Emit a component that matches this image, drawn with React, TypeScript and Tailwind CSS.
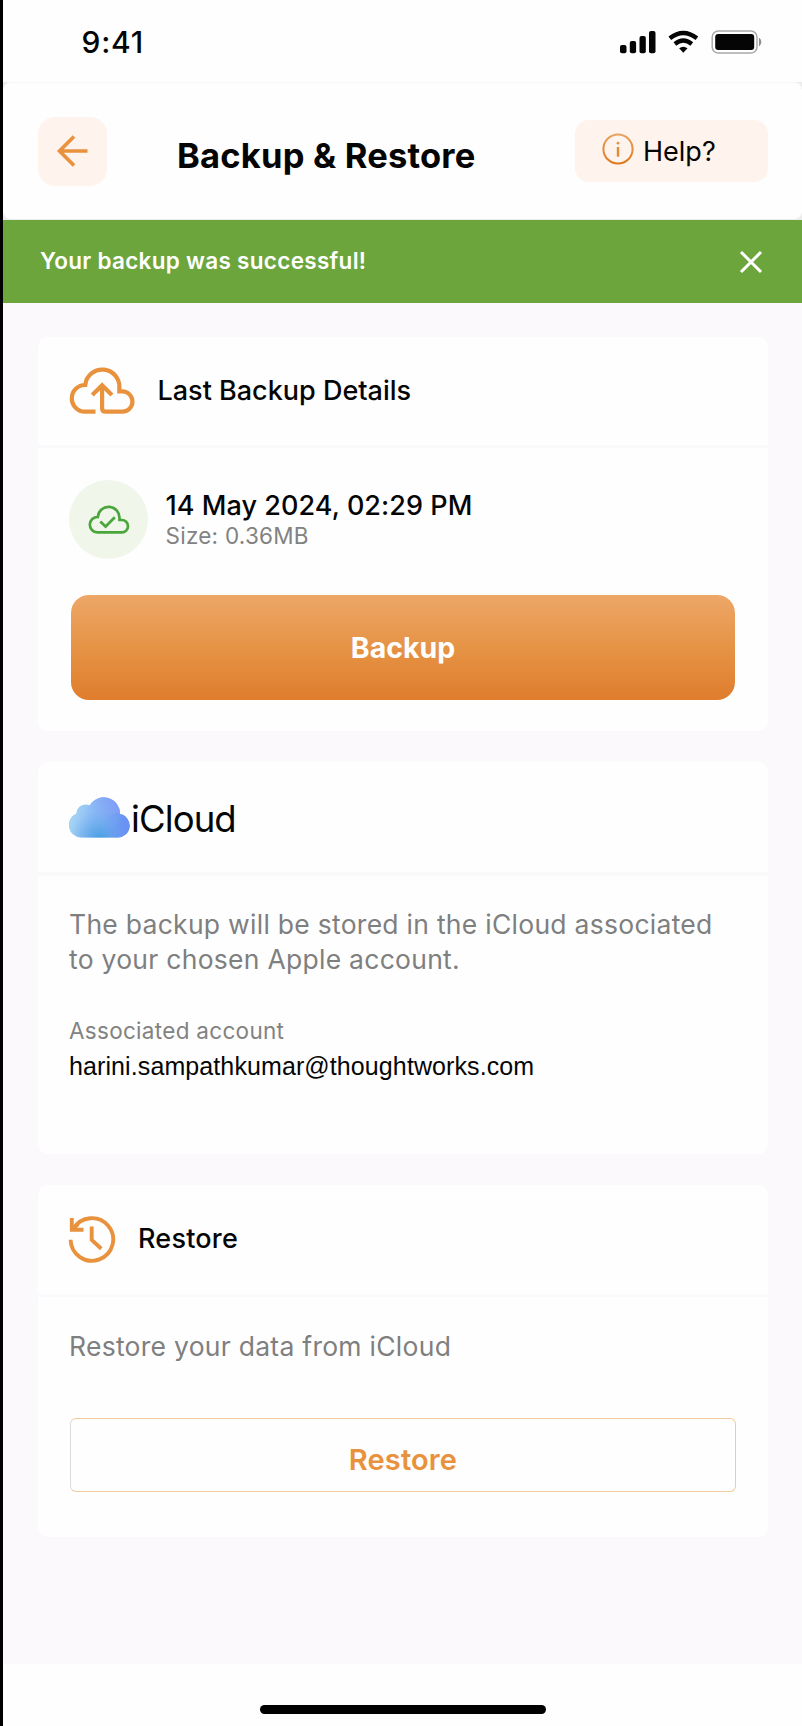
import type { ReactNode } from "react";

function StatusIcons() {
  return (
    <svg width="144" height="26" viewBox="617.5 29 144 26" fill="#050505">
      <rect x="619.5" y="45" width="6.5" height="8.3" rx="2" />
      <rect x="629.3" y="41" width="6.3" height="12.3" rx="2" />
      <rect x="639" y="36" width="6.3" height="17.3" rx="2" />
      <rect x="648.5" y="31" width="6.5" height="22.3" rx="2" />
      <g fill="none" stroke="#050505" strokeWidth="4.4">
        <path d="M669.3 38.2 Q682.8 27.6 696.4 38.2" />
        <path d="M674.4 43.9 Q682.8 37.3 691.3 43.9" />
      </g>
      <path d="M678.6 48.3 Q682.8 45 687 48.3 L682.8 52.8 Z" />
      <rect x="711.7" y="31" width="44.8" height="22" rx="6" fill="none" stroke="#a9a9a9" strokeWidth="1.5" />
      <rect x="714.7" y="34" width="39" height="16" rx="3" />
      <path d="M759 38.3 Q762 42 759 45.7 Z" fill="#8f8f8f" stroke="#8f8f8f" />
    </svg>
  );
}

function BackArrow() {
  return (
    <svg width="32" height="32" viewBox="56 134.5 32 32" fill="none" stroke="#e8923d" strokeWidth="3.6">
      <path d="M87.5 150.5 H59.5 M74 136 L59.5 150.5 L74 165" />
    </svg>
  );
}

function InfoIcon() {
  return (
    <svg width="32" height="32" viewBox="0 0 32 32" fill="none">
      <defs>
        <linearGradient id="info" x1="0" y1="0" x2="0" y2="32" gradientUnits="userSpaceOnUse">
          <stop stopColor="#eaa462" />
          <stop offset="1" stopColor="#dc7618" />
        </linearGradient>
      </defs>
      <circle cx="16" cy="16" r="14.6" stroke="url(#info)" strokeWidth="2" />
      <circle cx="16" cy="10.2" r="1.4" fill="#e39343" />
      <rect x="14.8" y="14" width="2.4" height="9.7" fill="#e08a36" />
    </svg>
  );
}

function CloudUpload() {
  return (
    <svg width="66" height="48" viewBox="68.5 367 66 48" fill="none" stroke="#e8923d" strokeWidth="4.2">
      <path d="M95 411.7 H84.5 A13.2 13.2 0 0 1 84.8 385 A17 17 0 0 1 118.8 388.3 V391.4 H121.8 A10.15 10.15 0 0 1 121.8 411.7 H105 Q101.6 411.7 101.6 408.3 V386" />
      <path d="M91.8 395 L101.6 385.2 L111.4 395" />
    </svg>
  );
}

function CloudCheck() {
  return (
    <svg width="42" height="31" viewBox="87.7 504 42 31" fill="none" stroke="#4aa53c" strokeWidth="2.7">
      <path d="M97 532.4 A7.7 7.7 0 0 1 97.5 517 A10.8 10.8 0 0 1 119.2 518.5 V520 H121.5 A6.2 6.2 0 0 1 121.5 532.4 Z" />
      <path d="M100 521.5 L105.3 526.5 L114.5 517.3" />
    </svg>
  );
}

function ICloudLogo() {
  return (
    <svg width="61" height="41" viewBox="0.5 0.5 61 41">
      <defs>
        <linearGradient id="cloudBase" x1="2" y1="12" x2="58" y2="30" gradientUnits="userSpaceOnUse">
          <stop stopColor="#a9d9f4" />
          <stop offset="0.45" stopColor="#86b6f5" />
          <stop offset="1" stopColor="#648cf4" />
        </linearGradient>
        <linearGradient id="cloudTop" x1="22" y1="22" x2="50" y2="4" gradientUnits="userSpaceOnUse">
          <stop stopColor="#8cbaf6" stopOpacity="0.2" />
          <stop offset="1" stopColor="#8199f5" />
        </linearGradient>
        <radialGradient id="cloudGlow" cx="31" cy="43" r="29" gradientUnits="userSpaceOnUse">
          <stop stopColor="#459fe0" />
          <stop offset="1" stopColor="#6aaeea" stopOpacity="0" />
        </radialGradient>
        <linearGradient id="cloudRight" x1="38" y1="28" x2="61" y2="28" gradientUnits="userSpaceOnUse">
          <stop stopColor="#6aa2f0" stopOpacity="0.3" />
          <stop offset="1" stopColor="#6a90f5" />
        </linearGradient>
        <clipPath id="cloudShape">
          <path d="M12.5 41 A12.5 12.5 0 0 1 7.8 17 A9.5 9.5 0 0 1 21.2 8.8 A16.3 16.3 0 0 1 51.5 17.6 A11.8 11.8 0 0 1 49 41 Z" />
        </clipPath>
      </defs>
      <g clipPath="url(#cloudShape)">
        <rect width="62" height="42" fill="url(#cloudBase)" />
        <circle cx="35.5" cy="16.5" r="17" fill="url(#cloudTop)" />
        <rect width="62" height="42" fill="url(#cloudGlow)" />
        <circle cx="49" cy="29" r="12.5" fill="url(#cloudRight)" />
      </g>
    </svg>
  );
}

function HistoryIcon() {
  return (
    <svg width="48" height="48" viewBox="68 1215.5 48 48" fill="none" stroke="#e8923d" strokeWidth="3.9">
      <path d="M70.6 1239.3 A21.3 21.3 0 1 0 73.5 1228.2" />
      <path d="M71.8 1217.5 V1229.3 H83.5" />
      <path d="M73 1228.5 L78 1223.5" />
      <path d="M91.7 1226 V1239.5 L101.3 1248.3" />
    </svg>
  );
}

function Card({ className, header, children }: { className: string; header: ReactNode; children: ReactNode }) {
  return (
    <section className={`flex flex-col overflow-hidden rounded-[10px] bg-[#fefefe] ${className}`}>
      {header}
      {children}
    </section>
  );
}

export default function App() {
  return (
    <div className="flex h-[1726px] w-[802px] flex-col overflow-hidden border-l-[3px] border-black bg-[#fefefe] font-['Inter',sans-serif] whitespace-nowrap text-[#050505]">
      <div className="flex h-[82px] shrink-0 items-center justify-between pt-[2px] pr-[40px] pl-[78.5px]">
        <span className="text-[30px] font-medium tracking-[0.8px]">9:41</span>
        <StatusIcons />
      </div>

      <div className="h-[138px] shrink-0 bg-[#ececec]">
        <header className="flex h-[137px] items-center rounded-[8px] border-t border-[#f8f8fa] bg-[#fefefe] pl-[35px]">
          <button className="flex h-[69px] w-[69px] items-center justify-center rounded-[17px] bg-[#fef3ed] pr-[2px]">
            <BackArrow />
          </button>
          <h1 className="ml-[70px] w-[330px] pt-[9px] text-[34.5px] leading-[40px] font-bold tracking-[0.2px]">Backup &amp; Restore</h1>
          <button className="ml-auto mr-[34px] flex h-[62px] w-[193px] items-center rounded-[14px] bg-[#fef3ed] pl-[26.5px]">
            <span className="-mt-1"><InfoIcon /></span>
            <span className="ml-[9.5px] pt-[2px] text-[27px] leading-[32px]">Help?</span>
          </button>
        </header>
      </div>

      <div className="flex h-[83px] shrink-0 items-center justify-between bg-[#6da53d] pr-[39.5px] pl-[37px] text-white">
        <span className="-mt-[2px] text-[22.5px] leading-[30px] font-semibold tracking-[0.3px]">Your backup was successful!</span>
        <svg className="mt-[1px]" width="24" height="24" viewBox="0 0 24 24" fill="none" stroke="#fff" strokeWidth="3">
          <path d="M2 2 L22 22 M22 2 L2 22" />
        </svg>
      </div>

      <main className="flex h-[1361px] shrink-0 flex-col bg-[#fbf9fc] pt-[34px] pr-[34px] pl-[35px]">
        <Card
          className="h-[394px]"
          header={
            <div className="flex h-[111px] shrink-0 items-center border-b-[3px] border-[#f9f8fa] pl-[30.5px]">
              <CloudUpload />
              <h2 className="-mt-[1px] ml-[23px] text-[27px] leading-[32px] font-medium">Last Backup Details</h2>
            </div>
          }
        >
          <div className="mt-[32px] flex items-center pl-[31px]">
            <div className="flex h-[79px] w-[79px] items-center justify-center rounded-full bg-[#f0f7ea]">
              <CloudCheck />
            </div>
            <div className="-mt-[2px] ml-[17.5px] flex flex-col">
              <span className="text-[27px] leading-[34px] font-medium tracking-[0.06px]">14 May 2024, 02:29 PM</span>
              <span className="text-[22.5px] leading-[26px] tracking-[0.25px] text-[#828282]">Size: 0.36MB</span>
            </div>
          </div>
          <button className="mt-[36px] ml-[33px] h-[105px] w-[664px] rounded-[18px] bg-linear-to-b from-[#eda767] via-[#e69345] to-[#df7d2c] pt-[1px] text-[28.5px] font-bold text-white">
            Backup
          </button>
        </Card>

        <Card
          className="mt-[31px] h-[392px]"
          header={
            <div className="flex h-[114px] shrink-0 items-center border-b-[4px] border-[#fafafa] pl-[31px]">
              <ICloudLogo />
              <h2 className="ml-[1px] pt-[3px] text-[36.5px] leading-[44px] tracking-[-0.9px]">iCloud</h2>
            </div>
          }
        >
          <p className="mt-[31px] pl-[31px] text-[26.5px] leading-[35px] tracking-[0.27px] text-[#7f7f7f]">
            The backup will be stored in the iCloud associated
            <br />
            to your chosen Apple account.
          </p>
          <p className="mt-[39px] pl-[31px] text-[22.5px] leading-[30px] tracking-[0.3px] text-[#828282]">Associated account</p>
          <p className="mt-[4px] pl-[31px] font-['Liberation_Sans',sans-serif] text-[25px] leading-[32px] tracking-[0.1px]">
            harini.sampathkumar@thoughtworks.com
          </p>
        </Card>

        <Card
          className="mt-[31px] h-[352px]"
          header={
            <div className="flex h-[112px] shrink-0 items-center border-b-[3px] border-[#fafafc] pl-[30px]">
              <HistoryIcon />
              <h2 className="-mt-[2px] ml-[22px] text-[27px] leading-[32px] font-medium tracking-[0.2px]">Restore</h2>
            </div>
          }
        >
          <p className="mt-[32px] pl-[31px] text-[26.5px] leading-[34px] tracking-[0.27px] text-[#7f7f7f]">Restore your data from iCloud</p>
          <button className="mt-[55px] ml-[32px] h-[74px] w-[666px] rounded-[6px] border-[1.5px] border-[#efcb9f] border-l-[#dedad8] pt-[9px] text-[29px] font-semibold tracking-[0.15px] text-[#e8923d]">
            Restore
          </button>
        </Card>
      </main>

      <footer className="flex h-[62px] shrink-0 justify-center pt-[41px] pl-[1px]">
        <div className="h-[9px] w-[286px] rounded-full bg-black" />
      </footer>
    </div>
  );
}
